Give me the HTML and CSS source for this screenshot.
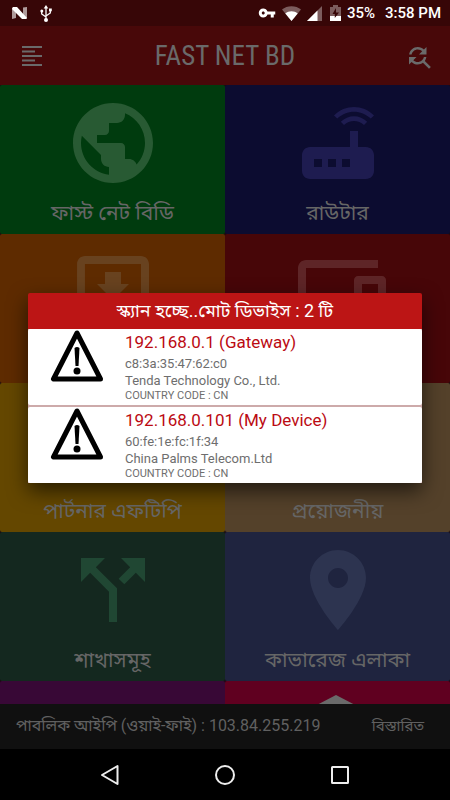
FILE: index.html
```html
<!DOCTYPE html>
<html lang="bn">
<head>
<meta charset="utf-8">
<meta name="viewport" content="width=device-width, initial-scale=1">
<title>FAST NET BD</title>
<link rel="stylesheet" href="styles.css">
</head>
<body>
<div class="screen">
  <div class="status">
    <div class="status-side">
      <svg width="16" height="12" viewBox="0 0 16 12"><path fill="#fff" opacity=".6" d="M0 .8 4 0v11L0 12zM11 .5 15 0v11.5l-4 .5z"/><path fill="#fff" d="M1 0h4l10 11-1 1h-4L0 2z"/></svg>
      <svg width="12" height="17" viewBox="0 0 12 17"><path d="M6 2v13M1.700 6v3L6 12M10.300 5v3L6 11" fill="none" stroke="#fff" stroke-width="1.300"/><path fill="#fff" d="M6 0 8.300 3.500H3.700z"/><circle cx="6" cy="15" r="2" fill="#fff"/><circle cx="1.800" cy="6" r="1.500" fill="#fff"/><path fill="#fff" d="M9 3.500h2.800v2.800H9z"/></svg>
    </div>
    <div class="status-side">
      <svg width="18" height="18" viewBox="0 0 24 24"><path fill="#fff" d="M12.650 10C11.830 7.670 9.610 6 7 6c-3.310 0-6 2.690-6 6s2.690 6 6 6c2.610 0 4.830-1.670 5.650-4H17v4h4v-4h2v-4H12.650zM7 14c-1.100 0-2-.9-2-2s.9-2 2-2 2 .9 2 2-.9 2-2 2z"/></svg>
      <svg width="19" height="15" viewBox="0 0 19 15"><path fill="#fff" opacity=".35" d="M0 3.500C5-1 14-1 19 3.500L9.500 15z"/><path fill="#fff" d="M3.300 7.500c3.500-3 8.900-3 12.400 0L9.500 15z"/></svg>
      <svg width="15" height="15" viewBox="0 0 15 15"><path fill="#fff" opacity=".35" d="M15 0v15H0z"/><path fill="#fff" d="M10.500 4.500V15H0z"/></svg>
      <svg class="battery" width="11" height="16" viewBox="0 0 11 16"><path fill="#fff" opacity=".35" d="M0 2h3V0h5v2h3v9H0z"/><path fill="#370607" d="M6 3 2.500 9h2.300v4L9 7.500H6z"/><path fill="#fff" d="M0 11h4.800v2l1.500-2H11v5H0z"/></svg>
      <span>35%</span><span class="clock">3:58 PM</span>
    </div>
  </div>
  <div class="app">
    <header class="topbar">
      <button class="icon-btn" aria-label="Menu"><svg width="20" height="20" viewBox="0 0 20 20"><path d="M0 1h20M0 5.500h13M0 10h20M0 14.500h13M0 19h20" stroke="#6a6a6a" stroke-width="2"/></svg></button>
      <h1>FAST NET BD</h1>
      <button class="icon-btn" aria-label="Scan"><svg width="30" height="30" viewBox="0 0 24 24"><path fill="#6a6a6a" d="M11 6c1.380 0 2.630.56 3.540 1.460L12 10h6V4l-2.050 2.050C14.680 4.780 12.930 4 11 4c-3.530 0-6.430 2.610-6.920 6H6.100c.46-2.280 2.480-4 4.900-4zm5.640 9.140c.66-.9 1.120-1.970 1.280-3.140H15.900c-.46 2.280-2.480 4-4.900 4-1.380 0-2.630-.56-3.540-1.460L10 12H4v6l2.050-2.050C7.320 17.220 9.070 18 11 18c1.550 0 2.980-.51 4.140-1.360L20 21.490 21.490 20l-4.850-4.860z"/></svg></button>
    </header>
    <main class="tiles">
      <a href="#" class="tile green"><svg viewBox="0 0 24 24"><path d="M12 2C6.480 2 2 6.480 2 12s4.480 10 10 10 10-4.480 10-10S17.520 2 12 2zm-1 17.930c-3.950-.49-7-3.850-7-7.930 0-.62.080-1.210.21-1.790L9 15v1c0 1.100.9 2 2 2v1.930zm6.900-2.540c-.26-.81-1-1.390-1.900-1.390h-1v-3c0-.55-.45-1-1-1H8v-2h2c.55 0 1-.45 1-1V7h2c1.100 0 2-.9 2-2v-.41c2.930 1.190 5 4.060 5 7.410 0 2.080-.8 3.970-2.100 5.390z"/></svg><span>ফাস্ট নেট বিডি</span></a>
      <a href="#" class="tile navy"><svg viewBox="0 0 24 24"><path d="M20.200 5.900l.8-.8C19.600 3.700 17.800 3 16 3s-3.600.7-5 2.100l.8.800C13 4.800 14.500 4.200 16 4.200s3 .6 4.200 1.700zm-.9.800c-.9-.9-2.100-1.400-3.300-1.400s-2.400.5-3.300 1.400l.8.800c.7-.7 1.600-1 2.500-1 .9 0 1.800.3 2.500 1l.8-.8zM19 13h-2V9h-2v4H5c-1.100 0-2 .9-2 2v4c0 1.100.9 2 2 2h14c1.100 0 2-.9 2-2v-4c0-1.100-.9-2-2-2zM8 18H6v-2h2v2zm3.500 0h-2v-2h2v2zm3.500 0h-2v-2h2v2z"/></svg><span>রাউটার</span></a>
      <a href="#" class="tile orange" aria-label="Downloads"><svg viewBox="0 0 24 24"><path d="M19 3H4.990c-1.110 0-1.980.9-1.980 2L3 19c0 1.100.88 2 1.990 2H19c1.100 0 2-.9 2-2V5c0-1.100-.9-2-2-2zm0 12h-4c0 1.660-1.350 3-3 3s-3-1.340-3-3H4.990V5H19v10zm-3-5h-2V7h-4v3H8l4 4 4-4z"/></svg></a>
      <a href="#" class="tile red" aria-label="Devices"><svg viewBox="0 0 24 24"><path d="M4 6h18V4H4c-1.100 0-2 .9-2 2v11H0v3h14v-3H4V6zm19 2h-6c-.55 0-1 .45-1 1v10c0 .55.45 1 1 1h6c.55 0 1-.45 1-1V9c0-.55-.45-1-1-1zm-1 9h-4v-7h4v7z"/></svg></a>
      <a href="#" class="tile amber"><svg viewBox="0 0 24 24"></svg><span>পার্টনার এফটিপি</span></a>
      <a href="#" class="tile brown"><svg viewBox="0 0 24 24"></svg><span>প্রয়োজনীয়</span></a>
      <a href="#" class="tile forest"><svg viewBox="0 0 24 24"><path d="M14 4l2.290 2.290-2.880 2.880 1.420 1.420 2.880-2.880L20 10V4zm-4 0H4v6l2.290-2.290 4.710 4.700V20h2v-8.410l-5.290-5.300z"/></svg><span>শাখাসমূহ</span></a>
      <a href="#" class="tile slate"><svg viewBox="0 0 24 24"><path d="M12 2C8.130 2 5 5.130 5 9c0 5.250 7 13 7 13s7-7.750 7-13c0-3.870-3.130-7-7-7zm0 9.500c-1.380 0-2.500-1.120-2.500-2.500s1.120-2.500 2.500-2.500 2.500 1.120 2.500 2.500-1.120 2.500-2.500 2.500z"/></svg><span>কাভারেজ এলাকা</span></a>
      <a href="#" class="tile purple" aria-label="More"></a>
      <a href="#" class="tile crimson" aria-label="Learning"><svg viewBox="0 0 24 24"><path d="M11.500 1 0 7l11.500 6L23 7z"/></svg></a>
    </main>
    <footer class="ipbar"><span>পাবলিক আইপি (ওয়াই-ফাই) : 103.84.255.219</span><button>বিস্তারিত</button></footer>
    <div class="overlay">
      <section class="dialog" role="dialog" aria-labelledby="scan-title">
        <h2 id="scan-title">স্ক্যান হচ্ছে..মোট ডিভাইস : 2 টি</h2>
        <ul>
          <li>
            <svg class="warn" width="54" height="54" viewBox="0 0 54 54"><path d="M27 4 3.500 50h47z" fill="none" stroke="#000" stroke-width="5" stroke-linejoin="round"/><path d="M24.500 19q2.500-2 5 0L28.500 37h-3z"/><circle cx="27" cy="42" r="3.500"/></svg>
            <div><h3>192.168.0.1 (Gateway)</h3><p>c8:3a:35:47:62:c0</p><p>Tenda Technology Co., Ltd.</p><p class="country">COUNTRY CODE : CN</p></div>
          </li>
          <li>
            <svg class="warn" width="54" height="54" viewBox="0 0 54 54"><path d="M27 4 3.500 50h47z" fill="none" stroke="#000" stroke-width="5" stroke-linejoin="round"/><path d="M24.500 19q2.500-2 5 0L28.500 37h-3z"/><circle cx="27" cy="42" r="3.500"/></svg>
            <div><h3>192.168.0.101 (My Device)</h3><p>60:fe:1e:fc:1f:34</p><p>China Palms Telecom.Ltd</p><p class="country">COUNTRY CODE : CN</p></div>
          </li>
        </ul>
      </section>
    </div>
  </div>
  <nav class="sysnav">
    <button aria-label="Back"><svg width="20" height="22" viewBox="0 0 20 22"><path d="M17.500 2v18L2 11z"/></svg></button>
    <button aria-label="Home"><svg width="20" height="22" viewBox="0 0 20 22"><circle cx="10" cy="11" r="9"/></svg></button>
    <button aria-label="Recent"><svg width="20" height="22" viewBox="0 0 20 22"><rect x="2" y="3" width="16" height="16" rx=".5"/></svg></button>
  </nav>
</div>
</body>
</html>
```

FILE: styles.css
```css
* { box-sizing: border-box; }
body, h1, h2, h3, p, ul { margin: 0; padding: 0; font-weight: 400; }
body { background: #000; font-family: Roboto, "Noto Sans Bengali", "Noto Sans", sans-serif; }
button { border: 0; padding: 0; background: none; color: inherit; font: inherit; }
svg { display: block; flex: none; }
.screen { display: flex; flex-direction: column; height: 100vh; }

.status { display: flex; justify-content: space-between; align-items: center; height: 26px; padding: 0 9px 0 12px; background: #370607; color: #fff; font-size: 15px; font-weight: 500; }
.status-side { display: flex; align-items: center; gap: 6px; }
.status-side:first-child { gap: 12px; }
.battery { margin-left: 2px; }
.clock { margin-left: 4px; }

.app { position: relative; flex: 1; min-height: 0; display: flex; flex-direction: column; }
.topbar { display: flex; justify-content: space-between; align-items: center; height: 59px; padding: 0 18px; background: #480809; color: #6a6a6a; }
.topbar h1 { font-family: "Roboto Condensed", Roboto, sans-serif; font-size: 27px; }
.icon-btn { display: grid; place-items: center; width: 28px; height: 28px; }

.tiles { flex: 1; min-height: 0; overflow: hidden; display: grid; grid-template-columns: 1fr 1fr; grid-auto-rows: 149px; background: #1a0a10; }
.tile { display: flex; flex-direction: column; align-items: center; padding-top: 10px; border-radius: 2px; color: #666; text-decoration: none; font-size: 21px; line-height: 44px; }
.tile svg { width: 96px; height: 96px; }
.green { background: #003b0e; } .green svg { fill: #285a33; }
.navy { background: #0c0c30; } .navy svg { fill: #1e1c50; }
.orange { background: #5e2b00; } .orange svg { fill: #68421f; }
.red { background: #470608; } .red svg { fill: #5e2527; }
.amber { background: #644700; }
.brown { background: #54412a; }
.forest { background: #14281f; } .forest svg { fill: #204733; }
.slate { background: #1f243f; } .slate svg { fill: #2d3450; }
.purple { background: #380836; }
.crimson { background: #600020; } .crimson svg { fill: #6a6a6a; }

.ipbar { display: flex; justify-content: space-between; align-items: center; height: 45px; padding: 0 26px 0 16px; background: #101010; color: #606060; font-size: 16px; }
.ipbar button { font-size: 15px; }

.overlay { position: absolute; inset: 0; display: flex; align-items: center; padding: 0 28px; }
.dialog { flex: 1; background: #bc1515; border-radius: 2px; box-shadow: 0 8px 20px rgba(0, 0, 0, .6); }
.dialog h2 { color: #fff; font-size: 18px; line-height: 36px; text-align: center; }
.dialog ul { list-style: none; display: grid; gap: 2px; background: #cdaaaa; }
.dialog li { display: flex; gap: 21px; height: 76px; padding: 0 23px; background: #fff; border-radius: 2px; color: #6e6e6e; }
.dialog .warn { margin-left: -1px; }
.dialog h3 { padding-top: 1px; color: #bb0a12; font-size: 17px; line-height: 25px; }
.dialog p { font-size: 13px; line-height: 17px; }
.dialog .country { font-size: 11px; line-height: 14px; }

.sysnav { display: flex; justify-content: center; align-items: center; gap: 95px; height: 51px; background: #000; }
.sysnav svg { fill: none; stroke: #eee; stroke-width: 2; stroke-linejoin: round; }
```
